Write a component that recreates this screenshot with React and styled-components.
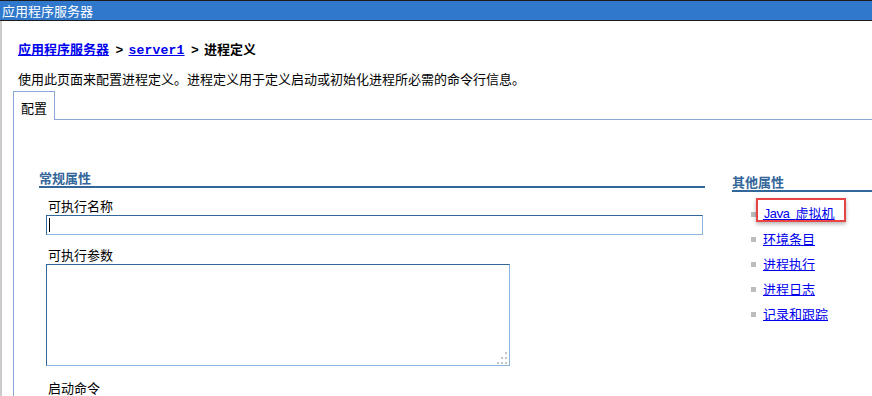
import React from 'react';
import styled, { createGlobalStyle } from 'styled-components';

const GlobalStyle = createGlobalStyle`
  html, body {
    margin: 0;
    padding: 0;
    background: #ffffff;
    overflow: hidden;
  }
  body {
    font-family: "Noto Sans CJK SC", "DejaVu Sans", sans-serif;
    font-size: 13px;
    color: #000000;
  }
`;

const Page = styled.div`
  width: 872px;
  height: 396px;
  overflow: hidden;
`;

const TitleBar = styled.div`
  height: 19px;
  line-height: 19px;
  border-top: 1px solid #1c1c1c;
  border-bottom: 1px solid #1c1c1c;
  background: #3078cc;
  color: #ffffff;
  padding-left: 2px;
`;

const Main = styled.div`
  border-left: 2px solid #cccccc;
  height: 375px;
  padding-left: 16px;
  box-sizing: border-box;
`;

const Breadcrumb = styled.div`
  padding-top: 20px;
  height: 16px;
  line-height: 16px;
  font-weight: bold;
  display: flex;
  align-items: baseline;
`;

const Link = styled.a`
  color: #0000ee;
  text-decoration: underline;
  cursor: pointer;
`;

const Mono = styled.span`
  font-family: "Liberation Mono", "DejaVu Sans Mono", monospace;
  letter-spacing: ${(p) => p.$spacing || '-1.3px'};
  white-space: pre;
`;

const Description = styled.p`
  margin: 14px 0 0;
  height: 16px;
  line-height: 16px;
`;

const TabStrip = styled.div`
  display: flex;
  height: 29px;
  margin: 4px 0 0 -5px;
`;

const Tab = styled.div`
  border: 1px solid #8ca8d8;
  border-bottom: none;
  padding: 8px 7px 0;
  box-sizing: border-box;
  line-height: 16px;
`;

const TabFiller = styled.div`
  flex: 1;
  border-bottom: 1px solid #8ca8d8;
`;

const Panel = styled.div`
  margin-left: -5px;
  border-left: 1px solid #8ca8d8;
  padding: 50px 0 0 25px;
  display: grid;
  grid-template-columns: 666px 1fr;
  column-gap: 27px;
  height: 300px;
`;

const Column = styled.div`
  padding-top: ${(p) => p.$offset || 0}px;
`;

const SectionHeading = styled.h3`
  margin: 0;
  font-size: 13px;
  line-height: 16px;
  font-weight: bold;
  color: #336699;
  border-bottom: 2px solid #336699;
`;

const Field = styled.div`
  padding-left: 7px;
`;

const FieldLabel = styled.label`
  display: block;
  padding-left: 2px;
  height: 16px;
  line-height: 16px;
  margin-top: ${(p) => p.$top}px;
  margin-bottom: 1px;
`;

const InputWrap = styled.div`
  position: relative;
  width: 657px;

  &::after {
    content: '';
    position: absolute;
    left: 3px;
    top: 3px;
    width: 1px;
    height: 14px;
    background: #000000;
  }
`;

const TextInput = styled.input`
  display: block;
  width: 657px;
  height: 20px;
  box-sizing: border-box;
  border: 1px solid #8db4dc;
  border-top-color: #336699;
  border-left-color: #336699;
  padding: 0 2px;
  font: inherit;
  outline: none;
`;

const AreaWrap = styled.div`
  position: relative;
  width: 464px;
`;

const TextArea = styled.textarea`
  display: block;
  width: 464px;
  height: 102px;
  box-sizing: border-box;
  border: 1px solid #8db4dc;
  border-top-color: #336699;
  border-left-color: #336699;
  padding: 2px;
  font: inherit;
  resize: none;
  outline: none;
`;

const Grip = styled.svg`
  position: absolute;
  right: 3px;
  bottom: 2px;
`;

const LinkList = styled.ul`
  list-style: none;
  margin: 14px 0 0;
  padding: 0 0 0 19px;
`;

const LinkItem = styled.li`
  display: flex;
  align-items: center;
  height: 16px;
  line-height: 16px;
  margin-bottom: 9px;
`;

const Bullet = styled.span`
  width: 5px;
  height: 5px;
  background: #bdbdbd;
  margin-right: 7px;
  flex-shrink: 0;
`;

const Highlighted = styled.span`
  position: relative;
`;

const HighlightBox = styled.span`
  position: absolute;
  left: -7px;
  top: -7px;
  width: 90px;
  height: 24px;
  box-sizing: border-box;
  border: 2px solid #e84444;
  box-shadow: 0 2px 4px rgba(0, 0, 0, 0.3);
  pointer-events: none;
`;

const otherLinks = ['环境条目', '进程执行', '进程日志', '记录和跟踪'];

const App = () => {
  return (
    <Page>
      <GlobalStyle />
      <TitleBar>应用程序服务器</TitleBar>
      <Main>
        <Breadcrumb>
          <Link>应用程序服务器</Link>
          <Mono>{' > '}</Mono>
          <Link>
            <Mono $spacing="0.2px">server1</Mono>
          </Link>
          <Mono>{' > '}</Mono>
          <span>进程定义</span>
        </Breadcrumb>
        <Description>
          使用此页面来配置进程定义。进程定义用于定义启动或初始化进程所必需的命令行信息。
        </Description>

        <TabStrip>
          <Tab>配置</Tab>
          <TabFiller />
        </TabStrip>

        <Panel>
          <Column>
            <SectionHeading>常规属性</SectionHeading>
            <Field>
              <FieldLabel $top={10}>可执行名称</FieldLabel>
              <InputWrap>
                <TextInput type="text" />
              </InputWrap>
              <FieldLabel $top={12}>可执行参数</FieldLabel>
              <AreaWrap>
                <TextArea />
                <Grip width="10" height="12" viewBox="0 0 10 12">
                  <g fill="#c4c4c4">
                    <rect x="8" y="0" width="2" height="2" />
                    <rect x="4" y="5" width="2" height="2" />
                    <rect x="8" y="5" width="2" height="2" />
                    <rect x="0" y="10" width="2" height="2" />
                    <rect x="4" y="10" width="2" height="2" />
                    <rect x="8" y="10" width="2" height="2" />
                  </g>
                </Grip>
              </AreaWrap>
              <FieldLabel $top={14}>启动命令</FieldLabel>
            </Field>
          </Column>

          <Column $offset={4}>
            <SectionHeading>其他属性</SectionHeading>
            <LinkList>
              <LinkItem>
                <Bullet />
                <Highlighted>
                  <Link>
                    <Mono>Java </Mono>虚拟机
                  </Link>
                  <HighlightBox />
                </Highlighted>
              </LinkItem>
              {otherLinks.map((label) => (
                <LinkItem key={label}>
                  <Bullet />
                  <Link>{label}</Link>
                </LinkItem>
              ))}
            </LinkList>
          </Column>
        </Panel>
      </Main>
    </Page>
  );
};

export default App;
